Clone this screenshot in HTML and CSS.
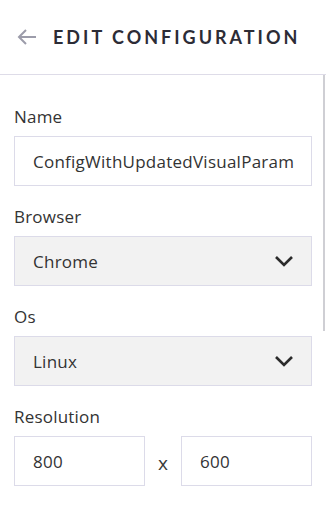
FILE: index.html
```html
<!DOCTYPE html>
<html lang="en">
<head>
  <meta charset="UTF-8">
  <meta name="viewport" content="width=device-width, initial-scale=1.0">
  <title>Edit Configuration</title>
  <link rel="stylesheet" href="styles.css">
</head>
<body>
<div class="top-bar">
  <button class="back-button">
    <svg width="20" height="16" viewBox="0 0 20 16"><path d="M19 8H2M9 1L2 8l7 7" fill="none" stroke="#9c9caa" stroke-width="2"/></svg>
  </button>
  <h1>EDIT CONFIGURATION</h1>
</div>

<div class="form-area">
  <div class="scroll-thumb"></div>

  <div class="field">
    <label>Name</label>
    <div class="box">ConfigWithUpdatedVisualParam</div>
  </div>

  <div class="field">
    <label>Browser</label>
    <div class="box select">
      <span>Chrome</span>
      <svg width="20" height="12" viewBox="0 0 20 12"><path d="M2 2l8 8 8-8" fill="none" stroke="#2b2b2b" stroke-width="2.6"/></svg>
    </div>
  </div>

  <div class="field">
    <label>Os</label>
    <div class="box select">
      <span>Linux</span>
      <svg width="20" height="12" viewBox="0 0 20 12"><path d="M2 2l8 8 8-8" fill="none" stroke="#2b2b2b" stroke-width="2.6"/></svg>
    </div>
  </div>

  <div class="field">
    <label>Resolution</label>
    <div class="resolution-row">
      <div class="box">800</div>
      <span class="times">x</span>
      <div class="box">600</div>
    </div>
  </div>
</div>
</body>
</html>
```

FILE: styles.css
```css
body {
  margin: 0;
  background-color: white;
  color: #333333;
  font-family: 'Open Sans', sans-serif;
}
.top-bar {
  display: flex;
  align-items: center;
  height: 73px;
  padding-bottom: 1px;
  border-bottom: 1px solid #dedce8;
  padding-left: 17px;
}
.back-button {
  display: flex;
  padding: 0;
  border: none;
  background: transparent;
  cursor: pointer;
  margin-right: 16px;
}
h1 {
  margin: 0;
  font-family: 'Lato', sans-serif;
  font-size: 18px;
  font-weight: 700;
  letter-spacing: 3px;
  white-space: nowrap;
  color: #2c2c36;
}
.form-area {
  position: relative;
  padding: 30px 14px 0 14px;
}
/* Thin scrollbar on the right edge */
.scroll-thumb {
  position: absolute;
  top: 0;
  right: 1px;
  width: 2px;
  height: 256px;
  background-color: #cfcfd4;
}
.field {
  margin-bottom: 19px;
}
label {
  display: block;
  font-size: 17px;
  line-height: 20px;
  letter-spacing: 0.2px;
  padding-top: 2px;
  margin-bottom: 9px;
}
.box {
  box-sizing: border-box;
  height: 50px;
  border: 1px solid #dcdbe9;
  padding: 0 18px;
  display: flex;
  align-items: center;
  font-size: 17px;
  letter-spacing: 0.25px;
  white-space: nowrap;
  overflow: hidden;
}
.select {
  background-color: #f2f2f2;
  justify-content: space-between;
  padding-right: 17px;
}
.resolution-row {
  display: flex;
  align-items: center;
}
.resolution-row .box {
  width: 131px;
}
.times {
  flex: 1;
  text-align: center;
  font-size: 19px;
  padding-top: 4px;
  color: #3a3a3a;
}
```
